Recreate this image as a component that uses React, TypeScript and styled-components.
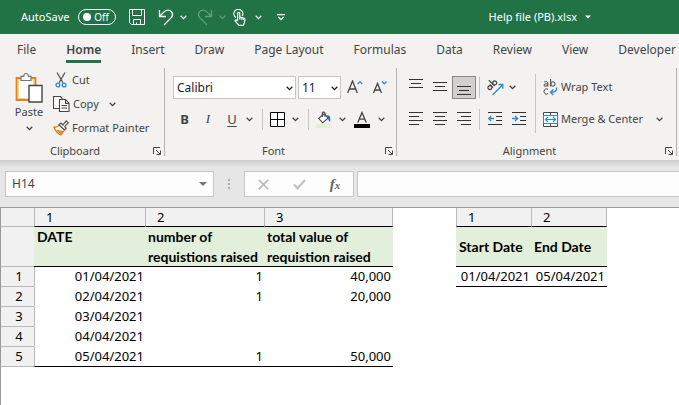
import React from "react";
import styled, { createGlobalStyle } from "styled-components";

const ui = '"Noto Sans", "Open Sans", sans-serif';
const sheetFont = 'Lato, "Liberation Sans", sans-serif';
const ink = "#444444";
const blue = "#2b88d8";
const green = "#217346";

const GlobalStyle = createGlobalStyle`
  *, *::before, *::after { box-sizing: border-box; }
  body { margin: 0; background: #fff; overflow-x: hidden; }
  button, input, select { font: inherit; color: inherit; margin: 0; }
`;

const Page = styled.div`
  min-height: 100vh;
  font-family: ${ui};
  font-size: 11px;
  line-height: 16px;
  color: ${ink};
  white-space: nowrap;
`;

const Spacer = styled.span<{ $width: number }>`
  flex: none;
  width: ${(p) => p.$width}px;
`;

const PlainButton = styled.button`
  display: flex;
  align-items: center;
  justify-content: center;
  padding: 0;
  border: 0;
  background: none;
`;

/* Title bar */
const TitleBar = styled.header`
  display: flex;
  align-items: center;
  height: 34px;
  padding: 0 88px 0 21px;
  background: ${green};
  color: #fff;
`;

const AutoSave = styled.label`
  display: flex;
  align-items: center;
  justify-content: space-between;
  width: 95px;
  margin-right: 9px;
`;

const SwitchPill = styled.span`
  display: flex;
  align-items: center;
  justify-content: space-between;
  width: 38px;
  height: 16px;
  padding: 0 6px 0 4px;
  border: 1px solid #fff;
  border-radius: 8px;
  font-size: 10px;
`;

const SwitchInput = styled.input`
  appearance: none;
  width: 8px;
  height: 8px;
  border-radius: 50%;
  background: #fff;
`;

const TitleButton = styled(PlainButton)<{ $width?: number; $before?: number; $dim?: boolean }>`
  flex: none;
  width: ${(p) => p.$width ?? 24}px;
  height: 24px;
  margin-left: ${(p) => p.$before ?? 0}px;
  opacity: ${(p) => (p.$dim ? 0.3 : 1)};
`;

const DocumentName = styled(PlainButton)`
  gap: 8px;
  margin-left: auto;
`;

/* Tabs */
const TabBar = styled.nav`
  display: flex;
  align-items: flex-start;
  gap: 30px;
  height: 32px;
  padding: 6px 0 0 17px;
  background: #f3f2f1;
  overflow: hidden;
`;

const Tab = styled.a<{ $active?: boolean }>`
  height: 23px;
  padding-top: 2px;
  border-bottom: 3px solid ${(p) => (p.$active ? green : "transparent")};
  font-size: 12px;
  line-height: 16px;
  font-weight: ${(p) => (p.$active ? 600 : 400)};
  color: ${ink};
  text-decoration: none;
`;

/* Ribbon */
const Ribbon = styled.div`
  display: flex;
  height: 94px;
  padding: 2px 0 4px;
  background: #f3f2f1;
  overflow: hidden;
`;

const Group = styled.section<{ $width: number }>`
  display: flex;
  flex-direction: column;
  flex: none;
  width: ${(p) => p.$width}px;
  border-right: 1px solid #b3b0ad;
`;

const GroupBody = styled.div<{ $left: number }>`
  display: flex;
  flex: 1;
  padding: 3px 0 0 ${(p) => p.$left}px;
`;

const GroupFooter = styled.div`
  display: grid;
  grid-template-columns: 1fr 14px;
  align-items: center;
  height: 18px;
  margin-bottom: -4px;
  text-align: center;
`;

const Launcher = styled(PlainButton)`
  height: 14px;
`;

const Column = styled.div`
  display: flex;
  flex-direction: column;
`;

const Row = styled.div<{ $height?: number }>`
  display: flex;
  align-items: center;
  height: ${(p) => p.$height ?? 32}px;
`;

const Tool = styled(PlainButton)<{ $width?: number; $pressed?: boolean }>`
  flex: none;
  width: ${(p) => p.$width ?? 24}px;
  height: 23px;
  border: 1px solid ${(p) => (p.$pressed ? "#8a8886" : "transparent")};
  background: ${(p) => (p.$pressed ? "#d2d0ce" : "transparent")};

  svg {
    flex: none;
  }
`;

const LabelTool = styled(PlainButton)<{ $gap?: number }>`
  gap: ${(p) => p.$gap ?? 3}px;
  height: 22px;
`;

const Letter = styled.span<{ $kind: "bold" | "italic" | "underline" }>`
  font-size: 13px;
  font-family: ${(p) => (p.$kind === "italic" ? '"Liberation Serif", serif' : ui)};
  font-weight: ${(p) => (p.$kind === "bold" ? 700 : 400)};
  font-style: ${(p) => (p.$kind === "italic" ? "italic" : "normal")};
  text-decoration: ${(p) => (p.$kind === "underline" ? "underline" : "none")};
  text-underline-offset: 2px;
`;

const PasteButton = styled(PlainButton)`
  flex-direction: column;
  justify-content: flex-start;
  width: 42px;
  padding-top: 1px;
`;

const PasteLabel = styled.span`
  margin: 1px 0 6px;
`;

const Divider = styled.span<{ $height?: number; $margin: string }>`
  flex: none;
  width: 1px;
  height: ${(p) => p.$height ?? 21}px;
  margin: ${(p) => p.$margin};
  background: #c8c6c4;
`;

const SelectBox = styled.span<{ $width: number }>`
  position: relative;
  display: flex;
  width: ${(p) => p.$width}px;
  height: 23px;
  margin-right: 2px;
  border: 1px solid #c8c6c4;
  background: #fff;
  color: #222;

  svg {
    position: absolute;
    right: 2px;
    top: 9px;
    pointer-events: none;
  }
`;

const Select = styled.select`
  appearance: none;
  width: 100%;
  padding: 1px 14px 0 3px;
  border: 0;
  background: transparent;
  font-size: 12px;
`;

/* Formula bar */
const FormulaBar = styled.div`
  display: flex;
  height: 48px;
  padding: 11px 0 10px 5px;
  border-bottom: 1px solid #9b9b9b;
  background: linear-gradient(#cccccc, #e6e6e6 7px);
`;

const BarBox = styled.div<{ $width: number }>`
  display: flex;
  align-items: center;
  flex: none;
  width: ${(p) => p.$width}px;
  border: 1px solid #c6c6c6;
  background: #fdfdfd;
`;

const NameInput = styled.input`
  flex: 1;
  min-width: 0;
  padding: 0 6px;
  border: 0;
  background: transparent;
  font-size: 12px;
`;

const NameArrow = styled(PlainButton)`
  width: 20px;
`;

const Grip = styled.span`
  display: flex;
  align-items: center;
  justify-content: center;
  flex: none;
  width: 30px;
`;

const FormulaButton = styled(PlainButton)`
  flex: 1;
`;

const FormulaInput = styled.input`
  flex: 1;
  min-width: 0;
  margin-left: 3px;
  border: 1px solid #c6c6c6;
  border-right: 0;
  background: #fdfdfd;
`;

const FunctionMark = styled.span`
  font: italic 700 15px/16px "Liberation Serif", serif;
  color: #666;

  small {
    font-size: 11px;
  }
`;

/* Worksheet */
const Sheet = styled.main`
  min-height: calc(100vh - 208px);
  border-left: 1px solid #9b9b9b;
  overflow: hidden;
`;

const Table = styled.table`
  table-layout: fixed;
  width: 606px;
  border-collapse: separate;
  border-spacing: 0;
  font-family: ${ui};
  font-size: 13px;
  line-height: 20px;
  color: #000;
`;

const Col = styled.col<{ $width: number }>`
  width: ${(p) => p.$width}px;
`;

const grey = "1px solid #b9b9b9";
const black = "1px solid #000";

const IndexCell = styled.th<{ $first?: boolean }>`
  height: 19px;
  padding: 0 0 0 11px;
  border-bottom: ${black};
  border-right: ${grey};
  border-left: ${(p) => (p.$first ? grey : "0")};
  background: #f1f1f1;
  font-weight: 400;
  line-height: 18px;
  text-align: left;
`;

const RowHead = styled.th<{ $height?: number }>`
  height: ${(p) => p.$height ?? 20}px;
  padding: 0 0 0 3px;
  border-bottom: ${grey};
  background: #f1f1f1;
  font-weight: 400;
  line-height: 19px;
`;

const TitleCell = styled.th<{ $first?: boolean; $middle?: boolean }>`
  height: 40px;
  padding: 0 0 0 ${(p) => (p.$first ? 3 : 2)}px;
  border-bottom: ${black};
  background: #e2efda;
  font-family: ${sheetFont};
  font-size: 14px;
  font-weight: 700;
  line-height: 20px;
  text-align: left;
  vertical-align: ${(p) => (p.$middle ? "middle" : "top")};
`;

const TitleText = styled.div`
  height: 39px;
`;

const Cell = styled.td<{ $first?: boolean; $last?: boolean }>`
  height: 20px;
  padding: 0 2px 0 0;
  border-bottom: ${(p) => (p.$last ? black : "1px solid transparent")};
  border-left: ${(p) => (p.$first ? grey : "0")};
  line-height: 19px;
  text-align: right;
`;

const Blank = styled.td`
  padding: 0;
`;

/* Icons */
const Chevron = ({ color = ink }: { color?: string }) => (
  <svg width="7" height="5" viewBox="0 0 7 5" fill="none" stroke={color} strokeWidth="1.3">
    <path d="M.7.8 3.5 3.6 6.3.8" />
  </svg>
);

const Triangle = ({ color, width }: { color: string; width: number }) => (
  <svg width={width} height="4" viewBox="0 0 8 4"><path d="M0 0h8L4 4z" fill={color} /></svg>
);

const SaveIcon = () => (
  <svg width="16" height="16" viewBox="0 0 16 16" fill="none" stroke="#fff">
    <path d="M.5.5h15v15H2.5l-2-2zM3.5.5v6h9v-6M4.5 15.5v-5h7v5M7.5 15.5v-2" />
  </svg>
);

const UndoIcon = () => (
  <svg width="16" height="17" viewBox="0 0 16 17" fill="none" stroke="#fff" strokeWidth="1.3">
    <path d="M1.5 1v6.5H8M1.5 7.5 5.8 3.1C8.2.7 11.4.5 13.2 2.5c1.9 2 1.5 4.6-.4 6.6L6 16" />
  </svg>
);

const RedoIcon = () => (
  <svg width="16" height="17" viewBox="0 0 16 17" fill="none" stroke="#fff" strokeWidth="1.3">
    <path d="M14.5 1v6.5H8M14.5 7.5l-4.3-4.4C7.8.7 4.6.5 2.8 2.5c-1.9 2-1.5 4.6.4 6.6L10 16" />
  </svg>
);

const TouchIcon = () => (
  <svg width="13" height="17" viewBox="0 0 13 17" fill="none" stroke="#fff" strokeWidth="1.2">
    <path d="M2.8 8.5A4.5 4.5 0 1 1 9.3 7" />
    <path d="M4.6 11.2V4.5a1.1 1.1 0 0 1 2.2 0V8l4 1c.9.2 1.2.8 1.1 1.6l-.7 4-1 1.8H6l-3.8-4.2c-.5-.8.6-1.6 1.3-1.1l1.1.8M6.8 8v2.6M8.8 8.6v2.2M10.4 9v2" />
  </svg>
);

const CustomizeIcon = () => (
  <svg width="8" height="7" viewBox="0 0 8 7" fill="none" stroke="#fff" strokeWidth="1.2">
    <path d="M0 .6h8M1.4 3 4 5.6 6.6 3" />
  </svg>
);

const PasteIcon = () => (
  <svg width="28" height="31" viewBox="0 0 28 31" fill="none">
    <path d="M1.5 6h19v22h-19z" fill="#fadb8b" stroke="#e08327" strokeWidth="1.8" />
    <path d="M4 8.5h14V26H4z" fill="#fff" />
    <path d="M6 8.5V4.4h2.7c.1-3.9 4.6-3.9 4.7 0H16v4.1z" fill="#fafafa" stroke="#777" strokeWidth="1.2" />
    <path d="M14 13.5h13V30H14z" fill="#fff" stroke="#444" strokeWidth="1.4" />
  </svg>
);

const CutIcon = () => (
  <svg width="12" height="16" viewBox="0 0 12 16" fill="none" strokeWidth="1.3">
    <path d="m2 .5 5.9 10.3M10 .5 4.1 10.8" stroke="#555" />
    <circle cx="2.9" cy="13" r="1.9" stroke={blue} />
    <circle cx="9.1" cy="13" r="1.9" stroke={blue} />
  </svg>
);

const CopyIcon = () => (
  <svg width="17" height="16" viewBox="0 0 17 16" fill="#fff" stroke={ink} strokeWidth="1.1">
    <path d="M6.5 12.5h-6V.5h7l1.5 1.5v2" />
    <path d="M6.5 3.5h6l3.5 3.7v8.3H6.5zM12.5 3.5v4H16M8.5 9.5H14M8.5 12H14" />
  </svg>
);

const PainterIcon = () => (
  <svg width="16" height="16" viewBox="0 0 16 16" fill="none">
    <path d="M1 7.2c2 .3 4-.6 5.2-2.1l5.2 5L8 15C5.5 14 2.5 11 1 7.2z" fill="#fff" stroke="#e07a1c" strokeWidth="1.3" />
    <path d="M2.5 9.5 10.5 11 8 15z" fill="#e88b30" />
    <path d="m6 4.7 2-1.7 2 2L13.3.9l2 1.9L11.7 6.5l1.6 1.8-1.8 1.7z" fill="#fff" stroke="#555" strokeWidth="1.2" />
  </svg>
);

const LauncherIcon = () => (
  <svg width="8" height="8" viewBox="0 0 8 8" fill="none" stroke={ink}>
    <path d="M.5 7V.5H7M3 3l4 4M7.5 3.5v4h-4" />
  </svg>
);

const FontSizeIcon = ({ grow }: { grow?: boolean }) => (
  <svg width="16" height="15" viewBox="0 0 16 15" fill="none" strokeWidth="1.3">
    <path d={grow ? "M.7 13 5.5 1 10.3 13M2.3 9h6.4" : "M1.5 13 5.5 3.5 9.5 13M2.8 10h5.4"} stroke={ink} />
    <path d={grow ? "m10.7 4 2.3-2.4L15.3 4" : "m10 1.5 2.3 2.4 2.3-2.4"} stroke={blue} />
  </svg>
);

const BordersIcon = () => (
  <svg width="15" height="15" viewBox="0 0 15 15" fill="#fff" stroke="#000">
    <path d="M.5.5h14v14H.5zM7.5.5v14M.5 7.5h14" />
  </svg>
);

const FillIcon = () => (
  <svg width="16" height="17" viewBox="0 0 16 17" fill="none">
    <path d="M0 13h16v4H0z" fill="#e2efda" />
    <path d="m8.2 2.8 4 4.2-5.5 4.8-4-4.4z" fill="#fff" stroke={ink} strokeWidth="1.1" />
    <path d="M6.3 6V2.2C6.3.5 9 .5 9 2.2V6" stroke={ink} strokeWidth="1.1" />
    <path d="M11 4c2.8.2 3.7 1.8 3.2 7-1.4-.5-2-2.6-2.2-4z" fill="#1f6fb5" />
  </svg>
);

const FontColorIcon = () => (
  <svg width="16" height="17" viewBox="0 0 16 17" fill="none">
    <path d="M0 13h16v4H0z" fill="#000" />
    <path d="M3.8 11.5 8 1.5l4.2 10M5.2 8.2h5.6" stroke={ink} strokeWidth="1.3" />
  </svg>
);

const Lines = ({ rows }: { rows: [number, number, number][] }) => (
  <svg width="14" height="18" viewBox="0 0 14 18" stroke="#333">
    {rows.map(([x1, x2, y]) => (
      <path key={y} d={`M${x1} ${y + 0.5}H${x2}`} />
    ))}
  </svg>
);

const IndentIcon = ({ increase }: { increase?: boolean }) => (
  <svg width="14" height="14" viewBox="0 0 14 14" fill="none" stroke="#333">
    <path d="M0 .5h14M8 4.5h6M8 8.5h6M0 12.5h14" />
    <path d={increase ? "M0 6.5h5.5M3 4l2.6 2.5L3 9" : "M6 6.5H.7M3.2 4 .6 6.5 3.2 9"} stroke={blue} strokeWidth="1.3" />
  </svg>
);

const OrientationIcon = () => (
  <svg width="17" height="17" viewBox="0 0 17 17" fill="none">
    <g transform="rotate(-45 6 7)" stroke={ink} strokeWidth="1.2">
      <circle cx="2.7" cy="6" r="2" />
      <path d="M4.9 3.6v4.6M7.2 0v8.2" />
      <circle cx="9.4" cy="6" r="2" />
    </g>
    <path d="M5.5 16 15.500 6M11.500 5.500h4.300v4.300" stroke={blue} strokeWidth="1.3" />
  </svg>
);

const WrapIcon = () => (
  <svg width="15" height="17" viewBox="0 0 15 17" fill="none">
    <g stroke={ink}>
      <path d="M1.2 3c1.8-.8 3.600-.5 3.600 1.300v3.200M4.800 4.900C2.500 4.700 1 5 1 6.200c0 1.500 3 1.500 3.800-.4M7.700 0v7.500" />
      <circle cx="9.9" cy="5" r="2.2" />
      <path d="M5 10.3c-2-1-4 0-4 2.200s2 3.200 4 2.200" />
    </g>
    <path d="M13.5 8.5c.6 3-.8 4.700-5.500 4.700M10.300 10.500 7.500 13.200l2.800 2.800" stroke={blue} strokeWidth="1.4" />
  </svg>
);

const MergeIcon = () => (
  <svg width="15" height="15" viewBox="0 0 15 15" fill="#fff" stroke={ink}>
    <path d="M.5.5h14v14H.5zM7.5.5v3M7.5 11.5v3" />
    <path d="M.5 3.5h14v8H.5z" stroke={blue} />
    <path d="M2.5 7.5h10M5 5 2.5 7.5 5 10M10 5l2.5 2.5L10 10" fill="none" stroke={blue} strokeWidth="1.2" />
  </svg>
);

const GripIcon = () => (
  <svg width="2" height="10" viewBox="0 0 2 10" fill="#aaa"><path d="M0 0h2v2H0zM0 4h2v2H0zM0 8h2v2H0z" /></svg>
);

const CancelIcon = () => (
  <svg width="11" height="11" viewBox="0 0 11 11" stroke="#bdbdbd" strokeWidth="1.8"><path d="m.8.8 9.4 9.4M10.2.8.8 10.2" /></svg>
);

const EnterIcon = () => (
  <svg width="13" height="11" viewBox="0 0 13 11" fill="none" stroke="#c4c4c4" strokeWidth="2.4"><path d="m1 5.5 3.6 3.7L12 1" /></svg>
);

const tabs = ["File", "Home", "Insert", "Draw", "Page Layout", "Formulas", "Data", "Review", "View", "Developer"];

const columnWidths = [33, 112, 119, 128, 63, 76, 75];

const rows = [
  { date: "01/04/2021", count: "1", value: "40,000" },
  { date: "02/04/2021", count: "1", value: "20,000" },
  { date: "03/04/2021", count: "", value: "" },
  { date: "04/04/2021", count: "", value: "" },
  { date: "05/04/2021", count: "1", value: "50,000" },
];

const GroupFoot = ({ name }: { name: string }) => (
  <GroupFooter>
    <span>{name}</span>
    <Launcher aria-label={`${name} settings`}><LauncherIcon /></Launcher>
  </GroupFooter>
);

const Drop = ({ width = 10, label }: { width?: number; label: string }) => (
  <Tool $width={width} aria-label={label}><Chevron /></Tool>
);

export default function App() {
  return (
    <Page>
      <GlobalStyle />
      <TitleBar>
        <AutoSave>
          AutoSave
          <SwitchPill><SwitchInput type="checkbox" role="switch" />Off</SwitchPill>
        </AutoSave>
        <TitleButton aria-label="Save"><SaveIcon /></TitleButton>
        <TitleButton $before={5} aria-label="Undo"><UndoIcon /></TitleButton>
        <TitleButton $width={10} aria-label="Undo history"><Chevron color="#fff" /></TitleButton>
        <TitleButton $before={5} $dim aria-label="Redo"><RedoIcon /></TitleButton>
        <TitleButton $width={10} $dim aria-label="Redo history"><Chevron color="#fff" /></TitleButton>
        <TitleButton aria-label="Touch mode"><TouchIcon /></TitleButton>
        <TitleButton $width={10} $before={2} aria-label="Touch mode options"><Chevron color="#fff" /></TitleButton>
        <TitleButton $width={16} $before={10} aria-label="Customize toolbar"><CustomizeIcon /></TitleButton>
        <DocumentName>Help file (PB).xlsx<Triangle color="#fff" width={6} /></DocumentName>
      </TitleBar>

      <TabBar>
        {tabs.map((tab) => (
          <Tab key={tab} href="#" $active={tab === "Home"}>{tab}</Tab>
        ))}
      </TabBar>

      <Ribbon>
        <Group $width={165}>
          <GroupBody $left={8}>
            <PasteButton>
              <PasteIcon />
              <PasteLabel>Paste</PasteLabel>
              <Chevron />
            </PasteButton>
            <Column>
              <Row $height={18}><Spacer $width={5} /><LabelTool $gap={5}><CutIcon />Cut</LabelTool></Row>
              <Row $height={30}>
                <Spacer $width={3} />
                <LabelTool><CopyIcon />Copy</LabelTool>
                <Spacer $width={9} />
                <Drop label="Copy options" />
              </Row>
              <Row $height={18}><Spacer $width={3} /><LabelTool><PainterIcon />Format Painter</LabelTool></Row>
            </Column>
          </GroupBody>
          <GroupFoot name="Clipboard" />
        </Group>

        <Group $width={232}>
          <GroupBody $left={8}>
            <Column>
              <Row>
                <SelectBox $width={123}>
                  <Select aria-label="Font"><option>Calibri</option></Select>
                  <Chevron color="#222" />
                </SelectBox>
                <SelectBox $width={43}>
                  <Select aria-label="Font size"><option>11</option></Select>
                  <Chevron color="#222" />
                </SelectBox>
                <Tool aria-label="Increase font size"><FontSizeIcon grow /></Tool>
                <Tool $width={26} aria-label="Decrease font size"><FontSizeIcon /></Tool>
              </Row>
              <Row>
                <Tool $width={23} aria-label="Bold"><Letter $kind="bold">B</Letter></Tool>
                <Tool aria-label="Italic"><Letter $kind="italic">I</Letter></Tool>
                <Tool aria-label="Underline"><Letter $kind="underline">U</Letter></Tool>
                <Drop label="Underline options" />
                <Divider $margin="0 2px 0 8px" />
                <Tool aria-label="Borders"><BordersIcon /></Tool>
                <Drop width={12} label="Borders options" />
                <Divider $margin="0 3px 0 7px" />
                <Tool aria-label="Fill color"><FillIcon /></Tool>
                <Drop width={12} label="Fill color options" />
                <Tool $width={28} aria-label="Font color"><FontColorIcon /></Tool>
                <Drop label="Font color options" />
              </Row>
            </Column>
          </GroupBody>
          <GroupFoot name="Font" />
        </Group>

        <Group $width={280}>
          <GroupBody $left={7}>
            <Column>
              <Row>
                <Tool aria-label="Top align"><Lines rows={[[0, 14, 1], [2, 12, 5], [0, 14, 9]]} /></Tool>
                <Tool aria-label="Middle align"><Lines rows={[[0, 14, 4], [2, 12, 8], [0, 14, 12]]} /></Tool>
                <Tool $pressed aria-label="Bottom align"><Lines rows={[[0, 14, 8], [2, 12, 12], [0, 14, 16]]} /></Tool>
                <Divider $margin="0 3px" />
                <Tool aria-label="Orientation"><OrientationIcon /></Tool>
                <Drop label="Orientation options" />
              </Row>
              <Row>
                <Tool aria-label="Align left"><Lines rows={[[0, 14, 2], [0, 10, 6], [0, 14, 10], [0, 10, 14]]} /></Tool>
                <Tool aria-label="Center"><Lines rows={[[0, 14, 2], [2, 12, 6], [0, 14, 10], [2, 12, 14]]} /></Tool>
                <Tool aria-label="Align right"><Lines rows={[[0, 14, 2], [4, 14, 6], [0, 14, 10], [4, 14, 14]]} /></Tool>
                <Divider $margin="0 3px" />
                <Tool aria-label="Decrease indent"><IndentIcon /></Tool>
                <Tool aria-label="Increase indent"><IndentIcon increase /></Tool>
              </Row>
            </Column>
            <Divider $height={59} $margin="3px 7px 0 4px" />
            <Column>
              <Row><LabelTool><WrapIcon />Wrap Text</LabelTool></Row>
              <Row>
                <LabelTool><MergeIcon />Merge &amp; Center</LabelTool>
                <Spacer $width={11} />
                <Drop label="Merge options" />
              </Row>
            </Column>
          </GroupBody>
          <GroupFoot name="Alignment" />
        </Group>
      </Ribbon>

      <FormulaBar>
        <BarBox $width={209}>
          <NameInput aria-label="Name box" defaultValue="H14" />
          <NameArrow aria-label="Named ranges"><Triangle color="#777" width={8} /></NameArrow>
        </BarBox>
        <Grip><GripIcon /></Grip>
        <BarBox $width={110}>
          <FormulaButton aria-label="Cancel"><CancelIcon /></FormulaButton>
          <FormulaButton aria-label="Enter"><EnterIcon /></FormulaButton>
          <FormulaButton aria-label="Insert function"><FunctionMark>f<small>x</small></FunctionMark></FormulaButton>
        </BarBox>
        <FormulaInput aria-label="Formula" />
      </FormulaBar>

      <Sheet>
        <Table>
          <colgroup>
            {columnWidths.map((width, i) => <Col key={i} $width={width} />)}
          </colgroup>
          <thead>
            <tr>
              <RowHead $height={19} />
              <IndexCell $first>1</IndexCell>
              <IndexCell>2</IndexCell>
              <IndexCell>3</IndexCell>
              <Blank />
              <IndexCell $first>1</IndexCell>
              <IndexCell>2</IndexCell>
            </tr>
            <tr>
              <RowHead $height={40} />
              <TitleCell $first>DATE</TitleCell>
              <TitleCell><TitleText>number of<br />requistions raised</TitleText></TitleCell>
              <TitleCell><TitleText>total value of<br />requistion raised</TitleText></TitleCell>
              <Blank />
              <TitleCell $first $middle>Start Date</TitleCell>
              <TitleCell $middle>End Date</TitleCell>
            </tr>
          </thead>
          <tbody>
            {rows.map((row, i) => {
              const last = i === rows.length - 1;
              return (
                <tr key={row.date}>
                  <RowHead>{i + 1}</RowHead>
                  <Cell $first $last={last}>{row.date}</Cell>
                  <Cell $last={last}>{row.count}</Cell>
                  <Cell $last={last}>{row.value}</Cell>
                  <Blank />
                  {i === 0 ? <><Cell $last>01/04/2021</Cell><Cell $last>05/04/2021</Cell></> : <><Blank /><Blank /></>}
                </tr>
              );
            })}
          </tbody>
        </Table>
      </Sheet>
    </Page>
  );
}
